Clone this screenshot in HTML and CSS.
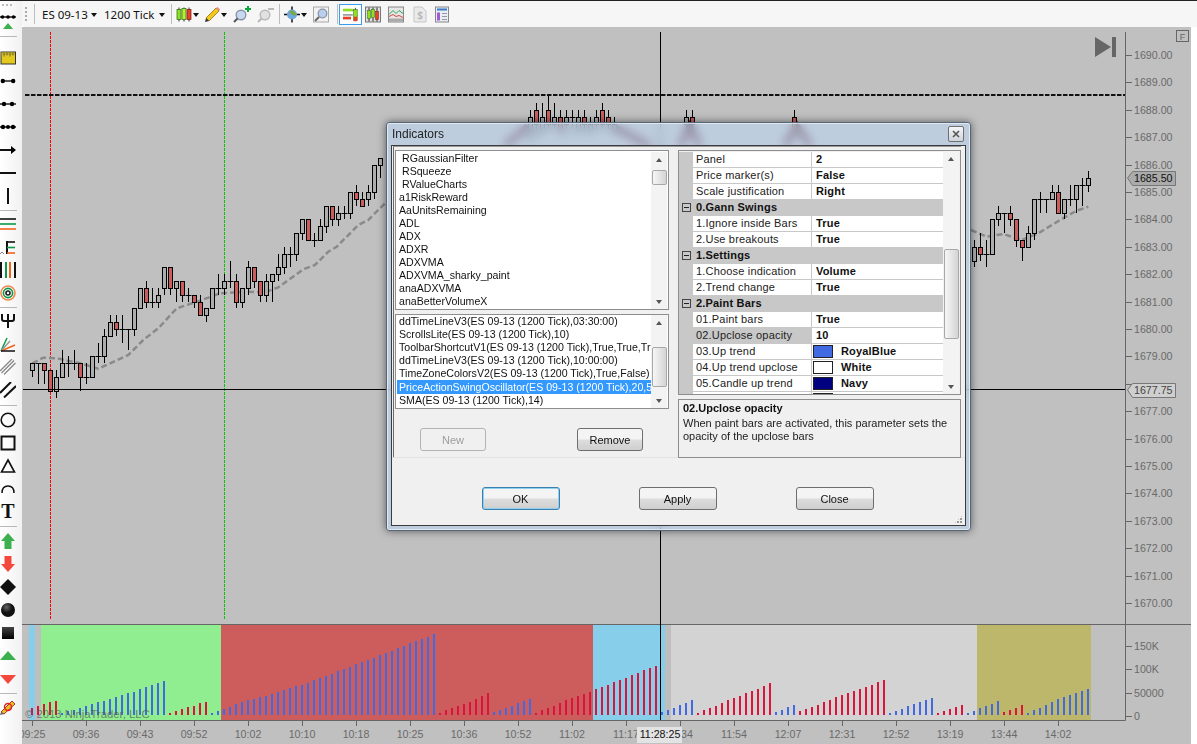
FILE: index.html
```html
<!DOCTYPE html>
<html lang="en">
<head>
    <meta charset="UTF-8">
    <meta name="viewport" content="width=device-width, initial-scale=1.0">
    <title>ES 09-13 1200 Tick - Indicators</title>
    <link rel="stylesheet" href="styles.css">
</head>
<body>
    <div class="app">
        <aside class="sidebar">
            <div class="side-grip"></div>
            <svg class="side-mini" viewBox="0 0 16 10"><path d="M0 3h16" stroke="#111" stroke-width="1.4"/><circle cx="2.5" cy="3" r="1.8"/><circle cx="8" cy="3" r="1.8"/><circle cx="13.5" cy="3" r="1.8"/></svg>
            <svg class="side-mini-up" viewBox="0 0 16 6"><path d="M8 0l5 6H3z" fill="#3cb04f"/></svg>
            <div class="side-sep first"></div>

            <div class="side-item"><svg viewBox="0 0 16 16"><rect x="1" y="2" width="14.5" height="12" fill="#e2c91c" stroke="#333"/><path d="M1.5 5h13V2.5h-13z" fill="#c9b010"/><path d="M4 2.5v4M7 2.5v3M10 2.5v4M13 2.5v3" stroke="#555" stroke-width=".8"/></svg></div>
            <div class="side-item"><svg viewBox="0 0 16 16"><path d="M2 8h12" stroke="#111" stroke-width="1.4"/><circle cx="2.8" cy="8" r="2.2"/><circle cx="13.2" cy="8" r="2.2"/></svg></div>
            <div class="side-item"><svg viewBox="0 0 16 16"><path d="M0 8h16" stroke="#111" stroke-width="1.4"/><circle cx="4" cy="8" r="2.2"/><circle cx="12" cy="8" r="2.2"/></svg></div>
            <div class="side-item"><svg viewBox="0 0 16 16"><path d="M0 8h16" stroke="#111" stroke-width="1.4"/><circle cx="3" cy="8" r="2.2"/><circle cx="8" cy="8" r="2"/><circle cx="13" cy="8" r="2.2"/></svg></div>
            <div class="side-item"><svg viewBox="0 0 16 16"><path d="M0 8h14" stroke="#111" stroke-width="2"/><path d="M11 4l5 4-5 4z"/></svg></div>
            <div class="side-item"><svg viewBox="0 0 16 16"><path d="M0 8h16" stroke="#111" stroke-width="2"/></svg></div>
            <div class="side-item"><svg viewBox="0 0 16 16"><path d="M8 0v16" stroke="#111" stroke-width="2"/></svg></div>
            <div class="side-sep"></div>

            <div class="side-item"><svg viewBox="0 0 16 16"><path d="M0 3h16" stroke="#111" stroke-width="1.6"/><path d="M0 8h16" stroke="#0a9a4a" stroke-width="1.6"/><path d="M0 13h16" stroke="#f0641e" stroke-width="1.6"/></svg></div>
            <div class="side-item"><svg viewBox="0 0 16 16"><path d="M7 2v13" stroke="#111" stroke-width="2"/><path d="M7 3h8" stroke="#111" stroke-width="1.6"/><path d="M7 8.5h8" stroke="#0a9a4a" stroke-width="1.6"/><path d="M7 14h8" stroke="#f0641e" stroke-width="1.6"/><path d="M0 15l2-2 2 2" fill="none" stroke="#888"/></svg></div>
            <div class="side-item"><svg viewBox="0 0 16 16"><path d="M1 0v16" stroke="#111" stroke-width="2"/><path d="M6 0v16" stroke="#0a9a4a" stroke-width="2"/><path d="M10 0v16" stroke="#f0641e" stroke-width="2"/><path d="M15 0v16" stroke="#111" stroke-width="2"/></svg></div>
            <div class="side-item"><svg viewBox="0 0 16 16" fill="none"><circle cx="8" cy="8" r="7" stroke="#f08a50" stroke-width="1.6"/><circle cx="8" cy="8" r="4.6" stroke="#0a9a4a" stroke-width="1.6"/><circle cx="8" cy="8" r="2" stroke="#222" stroke-width="1.6"/></svg></div>
            <div class="side-sep"></div>

            <div class="side-item"><svg viewBox="0 0 16 16" fill="none" stroke="#111" stroke-width="2"><path d="M8 15V1"/><path d="M2 1v5q0 2 2 2h8q2 0 2-2V1"/></svg></div>
            <div class="side-item"><svg viewBox="0 0 16 16" fill="none" stroke-width="1.5"><path d="M1 15L7 2" stroke="#0a9a4a"/><path d="M1 15l14-6" stroke="#f0641e"/><path d="M1 15L10 5" stroke="#999"/><path d="M1 15h14" stroke="#111"/></svg></div>
            <div class="side-item"><svg viewBox="0 0 16 16" stroke="#888" stroke-width="1.3"><path d="M0 12L12 0M1.500 14L14 1.500M4 15.500L15.500 4"/></svg></div>
            <div class="side-item"><svg viewBox="0 0 16 16" stroke="#111" stroke-width="2"><path d="M0 11L11 0M4 15.500L16 4"/></svg></div>
            <div class="side-sep sep-wide"></div>

            <div class="side-item"><svg viewBox="0 0 16 16"><circle cx="8" cy="8" r="6.800" fill="none" stroke="#111" stroke-width="1.600"/></svg></div>
            <div class="side-item"><svg viewBox="0 0 16 16"><rect x="1.500" y="1.500" width="13" height="13" fill="none" stroke="#111" stroke-width="2"/></svg></div>
            <div class="side-item"><svg viewBox="0 0 16 16"><path d="M8 2l6.500 12h-13z" fill="none" stroke="#111" stroke-width="1.600"/></svg></div>
            <div class="side-item"><svg viewBox="0 0 16 16"><path d="M2 12Q2 5 8 5t6 7" fill="none" stroke="#111" stroke-width="1.500"/></svg></div>
            <div class="side-item side-t">T</div>
            <div class="side-sep sep-mid"></div>

            <div class="side-item"><svg viewBox="0 0 16 16"><path d="M8 0l7 8h-3.500v8h-7V8H1z" fill="#3cb04f"/></svg></div>
            <div class="side-item"><svg viewBox="0 0 16 16"><path d="M8 16l7-8h-3.500V0h-7v8H1z" fill="#f4483c"/></svg></div>
            <div class="side-item"><svg viewBox="0 0 16 16"><path d="M8 0l8 8-8 8-8-8z" fill="#111"/></svg></div>
            <div class="side-item"><svg viewBox="0 0 16 16"><defs><radialGradient id="ball" cx=".4" cy=".3" r=".8"><stop offset="0" stop-color="#666"/><stop offset=".5" stop-color="#111"/></radialGradient></defs><circle cx="8" cy="8" r="7" fill="url(#ball)"/></svg></div>
            <div class="side-item"><svg viewBox="0 0 16 16"><defs><linearGradient id="sq" x1="0" y1="0" x2="0" y2="1"><stop offset="0" stop-color="#444"/><stop offset="1" stop-color="#000"/></linearGradient></defs><rect x="2" y="2" width="12" height="12" fill="url(#sq)"/></svg></div>
            <div class="side-item"><svg viewBox="0 0 16 16"><path d="M8 3l8 9H0z" fill="#3cb04f"/></svg></div>
            <div class="side-item"><svg viewBox="0 0 16 16"><path d="M8 13L0 4h16z" fill="#f4483c"/></svg></div>
            <div class="side-sep"></div>

            <div class="side-item"><svg viewBox="0 0 16 16"><path d="M1 13L12 2l3 3L4 15z" fill="#f0c020" stroke="#a33" stroke-width="1"/><circle cx="8" cy="8" r="3.500" fill="none" stroke="#d22" stroke-width="1.500"/><path d="M0 16l1-3 3 2z" fill="#666"/></svg></div>
        </aside>

        <div class="main">
            <div class="toolbar">
                <span class="grip ml-3"></span>
                <span class="tb-sep ml-7"></span>
                <span class="dd-label ml-7 w-46">ES 09-13</span>
                <span class="caret ml-3"></span>
                <span class="dd-label ml-7 w-48">1200 Tick</span>
                <span class="caret ml-3"></span>
                <span class="tb-sep ml-6"></span>
                <svg class="ml-4 w-16" viewBox="0 0 16 16"><path d="M3 1v14M8 1v14M13 1v14" stroke="#333"/><rect x="1" y="3" width="4" height="10" fill="#8fe020" stroke="#2a6a10" stroke-width=".7"/><rect x="6" y="2" width="4" height="11" fill="#b4ef3a" stroke="#2a6a10" stroke-width=".7"/><rect x="11" y="3" width="4" height="10" fill="#e64028" stroke="#7a1a10" stroke-width=".7"/></svg>
                <span class="caret ml-1"></span>
                <svg class="ml-5 w-17" viewBox="0 0 17 17"><path d="M2 12L12 2l3 3L5 15z" fill="#f2c81e" stroke="#96700a" stroke-width=".8"/><path d="M12 2l3 3 1-1.500L13.500 1z" fill="#e88"/><path d="M2 12l3 3-4 1z" fill="#333"/></svg>
                <span class="caret"></span>
                <svg class="ml-6 w-19" viewBox="0 0 19 17"><circle cx="8" cy="9" r="4.800" fill="#c6d8f0" stroke="#8a94a6" stroke-width="1.400"/><path d="M4.500 12.500L1 16" stroke="#555" stroke-width="2"/><path d="M15 0v6M12 3h6" stroke="#0aa83a" stroke-width="2"/></svg>
                <svg class="ml-5 w-17 dim" viewBox="0 0 17 17"><circle cx="8" cy="9" r="4.800" fill="#ddd" stroke="#aaa" stroke-width="1.400"/><path d="M4.500 12.500L1 16" stroke="#aaa" stroke-width="2"/><path d="M11 3h6" stroke="#aaa" stroke-width="2"/></svg>
                <span class="tb-sep ml-5"></span>
                <svg class="ml-4 w-16" viewBox="0 0 16 16"><path d="M8 0v16M0 8h16" stroke="#111" stroke-width="1.500"/><circle cx="8" cy="8" r="5" fill="#6ea8dc"/><path d="M5 5q3-2 5 0t2 4q-3 0-4-1t-3-3z" fill="#7fa83a"/></svg>
                <span class="caret ml-1"></span>
                <svg class="ml-6 w-16" viewBox="0 0 16 16"><rect x=".5" y=".5" width="15" height="15" fill="#f2f2f2" stroke="#aaa"/><circle cx="9.500" cy="7" r="4.300" fill="#b8d0ee" stroke="#8a94a6" stroke-width="1.300"/><path d="M6 10.500L2 14.500" stroke="#666" stroke-width="2"/></svg>
                <span class="tb-sep ml-8"></span>
                <span class="tb-active ml-1">
                    <svg class="w-16" viewBox="0 0 18 17"><path d="M0 4h12" stroke="#2a6a10"/><rect x="0" y="2" width="11" height="3" fill="#8fe020"/><path d="M0 9h11" stroke="#444"/><rect x="0" y="11" width="9" height="3" fill="#e64028"/><path d="M14 1v15" stroke="#333"/><rect x="12" y="3" width="4" height="12" fill="#8fe020" stroke="#2a6a10" stroke-width=".6"/><rect x="12" y="11" width="4" height="5" fill="#e64028"/></svg>
                </span>
                <svg class="ml-3 w-16" viewBox="0 0 16 16"><rect x=".5" y=".5" width="15" height="15" fill="#ddd" stroke="#777"/><path d="M4 1v14M8 1v14M12 1v14" stroke="#333"/><rect x="2.500" y="4" width="3" height="8" fill="#8fe020" stroke="#2a6a10" stroke-width=".5"/><rect x="6.500" y="3" width="3" height="8" fill="#8fe020" stroke="#2a6a10" stroke-width=".5"/><rect x="10.500" y="5" width="3" height="8" fill="#e64028" stroke="#7a1a10" stroke-width=".5"/></svg>
                <svg class="ml-7 w-16" viewBox="0 0 16 16"><rect x=".5" y=".5" width="15" height="15" fill="#e6e6e6" stroke="#888"/><path d="M1 8l4-4 3 3 3-3 4 3" fill="none" stroke="#2aa85a"/><path d="M1 10l4-2 3 2 3-1 4 2" fill="none" stroke="#d84848"/><rect x="1" y="12" width="14" height="3" fill="#aaa"/></svg>
                <svg class="ml-9 w-14 dim" viewBox="0 0 14 16"><path d="M1 .5h8l4 4v11H1z" fill="#e8e8e8" stroke="#bbb"/><text x="7" y="12" class="dollar">$</text></svg>
                <svg class="ml-8 w-14" viewBox="0 0 14 16"><rect x=".5" y=".5" width="13" height="15" fill="#e8eef6" stroke="#888"/><rect x="2" y="2" width="10" height="2" fill="#3a7ac8"/><rect x="2" y="6" width="3" height="8" fill="#a45ad8"/><path d="M7 7h5M7 10h5M7 13h5" stroke="#999"/></svg>
            </div>

            <div class="chart-row">
                <svg id="chart" class="chart" viewBox="22 27 1169 717"></svg>
                <div class="white-strip"></div>
            </div>
        </div>

        <div class="dialog">
            <div class="dlg-title">
                <span>Indicators</span>
                <button class="dlg-close"><svg viewBox="0 0 8 8"><path d="M1 1l6 6M7 1L1 7" stroke="#555" stroke-width="1.600"/></svg></button>
            </div>
            <div class="dlg-body">
                <div class="dlg-main">
                    <div class="left-col">
                        <div class="listbox list-all">
                            <ul>
                                <li class="indent">RGaussianFilter</li>
                                <li class="indent">RSqueeze</li>
                                <li class="indent">RValueCharts</li>
                                <li>a1RiskReward</li>
                                <li>AaUnitsRemaining</li>
                                <li>ADL</li>
                                <li>ADX</li>
                                <li>ADXR</li>
                                <li>ADXVMA</li>
                                <li>ADXVMA_sharky_paint</li>
                                <li>anaADXVMA</li>
                                <li>anaBetterVolumeX</li>
                            </ul>
                            <div class="scrollbar">
                                <span class="arrow up"></span>
                                <div class="track"><div class="thumb thumb-all"></div></div>
                                <span class="arrow down"></span>
                            </div>
                        </div>
                        <div class="listbox list-used">
                            <ul>
                                <li>ddTimeLineV3(ES 09-13 (1200 Tick),03:30:00)</li>
                                <li>ScrollsLite(ES 09-13 (1200 Tick),10)</li>
                                <li>ToolbarShortcutV1(ES 09-13 (1200 Tick),True,True,True)</li>
                                <li>ddTimeLineV3(ES 09-13 (1200 Tick),10:00:00)</li>
                                <li>TimeZoneColorsV2(ES 09-13 (1200 Tick),True,False)</li>
                                <li class="selected">PriceActionSwingOscillator(ES 09-13 (1200 Tick),20,5,True)</li>
                                <li>SMA(ES 09-13 (1200 Tick),14)</li>
                            </ul>
                            <div class="scrollbar">
                                <span class="arrow up"></span>
                                <div class="track"><div class="thumb thumb-used"></div></div>
                                <span class="arrow down"></span>
                            </div>
                        </div>
                        <div class="list-buttons">
                            <button class="btn" disabled>New</button>
                            <button class="btn">Remove</button>
                        </div>
                    </div>

                    <div class="right-col">
                        <div class="propgrid">
                            <div class="pg-rows">
                                <div class="pg-row"><span class="pg-name">Panel</span><span class="pg-val">2</span></div>
                                <div class="pg-row"><span class="pg-name">Price marker(s)</span><span class="pg-val">False</span></div>
                                <div class="pg-row"><span class="pg-name">Scale justification</span><span class="pg-val">Right</span></div>
                                <div class="pg-cat"><span class="pg-box"></span>0.Gann Swings</div>
                                <div class="pg-row"><span class="pg-name">1.Ignore inside Bars</span><span class="pg-val">True</span></div>
                                <div class="pg-row"><span class="pg-name">2.Use breakouts</span><span class="pg-val">True</span></div>
                                <div class="pg-cat"><span class="pg-box"></span>1.Settings</div>
                                <div class="pg-row"><span class="pg-name">1.Choose indication</span><span class="pg-val">Volume</span></div>
                                <div class="pg-row"><span class="pg-name">2.Trend change</span><span class="pg-val">True</span></div>
                                <div class="pg-cat"><span class="pg-box"></span>2.Paint Bars</div>
                                <div class="pg-row"><span class="pg-name">01.Paint bars</span><span class="pg-val">True</span></div>
                                <div class="pg-row"><span class="pg-name active">02.Upclose opacity</span><span class="pg-val">10</span></div>
                                <div class="pg-row"><span class="pg-name">03.Up trend</span><span class="pg-val"><i class="swatch royal"></i>RoyalBlue</span></div>
                                <div class="pg-row"><span class="pg-name">04.Up trend upclose</span><span class="pg-val"><i class="swatch white"></i>White</span></div>
                                <div class="pg-row"><span class="pg-name">05.Candle up trend</span><span class="pg-val"><i class="swatch navy"></i>Navy</span></div>
                                <div class="pg-row"><span class="pg-name"></span><span class="pg-val"><i class="swatch crimson"></i></span></div>
                            </div>
                            <div class="scrollbar">
                                <span class="arrow up"></span>
                                <div class="track"><div class="thumb thumb-grid"></div></div>
                                <span class="arrow down"></span>
                            </div>
                        </div>
                        <div class="desc">
                            <strong>02.Upclose opacity</strong>
                            <p>When paint bars are activated, this parameter sets the opacity of the upclose bars</p>
                        </div>
                    </div>
                </div>
                <div class="dlg-foot">
                    <button class="btn big default">OK</button>
                    <button class="btn big">Apply</button>
                    <button class="btn big">Close</button>
                    <span class="resize-grip"></span>
                </div>
            </div>
        </div>
    </div>
    <script src="chart.js"></script>
</body>
</html>
```

FILE: styles.css
```css
* {
    box-sizing: border-box;
}

body {
    margin: 0;
    font-family: "Liberation Sans", Arial, sans-serif;
    background: #fff;
}

.app {
    display: grid;
    grid-template-columns: 22px 1fr;
    width: 1197px;
    height: 744px;
    overflow: hidden;
    position: relative;
}

/* left drawing tools */
.sidebar {
    display: flex;
    flex-direction: column;
    height: 744px;
    background: linear-gradient(to right, #fff, #f1f1f1);
    border-top: 1px solid #222;
}

.side-grip {
    width: 12px;
    height: 2px;
    margin: 3px 0 0 2px;
    background: repeating-linear-gradient(to right, #bbb 0 2px, transparent 2px 4px);
}

.side-mini {
    width: 16px;
    height: 10px;
    margin-top: 8px;
    flex: none;
    display: block;
}

.side-mini-up {
    width: 16px;
    height: 6px;
    margin-top: -1px;
    flex: none;
    display: block;
}

.side-sep {
    width: 17px;
    height: 1px;
    background: #b8b8b8;
    margin: 3px 0 1px;
    flex: none;
}

.side-sep.first {
    margin: 7px 0 9px;
}

.side-sep.sep-wide {
    margin: 4px 0 2px;
}

.side-sep.sep-mid {
    margin: 3px 0 2px;
}

.side-item {
    height: 23px;
    width: 16px;
    flex: none;
    display: flex;
    align-items: center;
    justify-content: center;
}

.side-item svg {
    width: 16px;
    height: 16px;
    display: block;
}

.side-t {
    font-family: "Liberation Serif", serif;
    font-weight: bold;
    font-size: 20px;
    color: #111;
}

.main {
    display: flex;
    flex-direction: column;
    min-width: 0;
}

/* top toolbar */
.toolbar {
    height: 27px;
    flex: none;
    display: flex;
    align-items: center;
    background: #f6f6f6;
    border-top: 1px solid #222;
    border-bottom-left-radius: 4px;
    font-family: "Noto Sans", sans-serif;
    font-size: 11.5px;
    color: #111;
}

.toolbar svg {
    display: block;
    height: 17px;
    flex: none;
}

.grip {
    width: 2px;
    height: 14px;
    background: repeating-linear-gradient(to bottom, #aaa 0 2px, transparent 2px 4px);
}

.tb-sep {
    width: 1px;
    height: 20px;
    background: #bdbdbd;
}

.dd-label {
    white-space: nowrap;
    flex: none;
}

.w-46 { width: 46px; }
.w-48 { width: 52px; }
.w-14 { width: 14px; }
.w-16 { width: 16px; }
.w-17 { width: 17px; }
.w-19 { width: 19px; }

.ml-1 { margin-left: 1px; }
.ml-3 { margin-left: 3px; }
.ml-4 { margin-left: 4px; }
.ml-5 { margin-left: 5px; }
.ml-6 { margin-left: 6px; }
.ml-7 { margin-left: 7px; }
.ml-8 { margin-left: 8px; }
.ml-9 { margin-left: 9px; }

.caret {
    width: 0;
    height: 0;
    flex: none;
    margin-top: 2px;
    border: 3.5px solid transparent;
    border-top: 4px solid #111;
    border-bottom: 0;
}

.dim {
    opacity: .8;
}

.dollar {
    font-size: 10px;
    font-weight: bold;
    fill: #aaa;
    text-anchor: middle;
}

.tb-active {
    width: 23px;
    height: 21px;
    display: flex;
    align-items: center;
    justify-content: center;
    border: 1px solid #3a9cf0;
    background: #fdfdfd;
}

/* chart */
.chart-row {
    flex: 1;
    display: flex;
    min-height: 0;
}

.chart {
    width: 1169px;
    height: 717px;
    display: block;
    background: #c0c0c0;
    flex: none;
}

.white-strip {
    flex: 1;
    background: #fff;
}

.axis-line {
    stroke: #666;
    stroke-width: 1;
}

.tick-label {
    font-size: 10.67px;
    fill: #6a6a6a;
}

.tag {
    fill: #ababab;
    stroke: #777;
}

.tag.light {
    fill: #cfcfcf;
}

.tag-text {
    font-size: 10.67px;
    fill: #111;
}

.tag-text.dim-text {
    fill: #444;
}

.time-tag {
    fill: #e3e3e3;
}

.time-tag-text {
    font-size: 10.67px;
    fill: #111;
    text-anchor: middle;
}

.copyright {
    font-size: 11.3px;
    fill: rgba(85, 85, 85, .7);
}

.f-box {
    fill: none;
    stroke: #666;
}

.f-text {
    font-size: 9px;
    fill: #666;
    text-anchor: middle;
}

/* dialog sits over the chart, the frame shows it through like aero glass */
.dialog {
    position: absolute;
    left: 386px;
    top: 122px;
    width: 585px;
    height: 409px;
    display: flex;
    flex-direction: column;
    padding: 0 4px 4px;
    border: 1px solid #56677a;
    border-radius: 3px;
    background: rgba(187, 213, 240, .62);
    -webkit-backdrop-filter: blur(5px);
    backdrop-filter: blur(5px);
    box-shadow: 0 0 9px rgba(0, 0, 0, .55), inset 0 0 0 1px rgba(255, 255, 255, .55);
    font-size: 11px;
    color: #111;
}

.dlg-title {
    height: 22px;
    flex: none;
    display: flex;
    align-items: center;
    justify-content: space-between;
    font-size: 12px;
    color: #222;
    padding: 0 0 0 1px;
}

.dlg-close {
    width: 16px;
    height: 16px;
    padding: 0;
    margin: 0 2px 0 0;
    display: flex;
    align-items: center;
    justify-content: center;
    border: 1px solid #6f6f6f;
    border-radius: 2px;
    background: linear-gradient(#f4f6f8, #cfd5dc);
}

.dlg-close svg {
    width: 8px;
    height: 8px;
}

.dlg-body {
    flex: 1;
    display: flex;
    flex-direction: column;
    background: #f0f0f0;
    border: 1px solid #3b3b3b;
    min-height: 0;
}

.dlg-main {
    height: 312px;
    flex: none;
    display: flex;
    border-bottom: 1px solid #e2e2e2;
}

.left-col {
    width: 285px;
    margin-left: 1px;
    flex: none;
    padding: 3px 0 0 1px;
    border-left: 1px solid #6a6a6a;
    border-top: 1px solid #9a9a9a;
}

.listbox {
    width: 274px;
    display: flex;
    background: #fff;
    border: 1px solid #8e8e8e;
    font-size: 10.6px;
    line-height: 13px;
}

.list-all {
    height: 160px;
    padding-top: 1px;
}

.list-used {
    height: 95px;
    margin-top: 4px;
}

.listbox ul {
    flex: 1;
    min-width: 0;
    margin: 0;
    padding: 0 0 0 1px;
    list-style: none;
    overflow: hidden;
}

.listbox li {
    height: 13px;
    padding-left: 2px;
    white-space: nowrap;
    overflow: hidden;
}

.listbox li.indent {
    padding-left: 5px;
}

.listbox li.selected {
    height: 14px;
    line-height: 14px;
    background: #3399ff;
    color: #fff;
}

.scrollbar {
    width: 16px;
    flex: none;
    display: flex;
    flex-direction: column;
    background: #f3f3f3;
    margin-right: 1px;
}

.arrow {
    height: 15px;
    flex: none;
    display: flex;
    align-items: center;
    justify-content: center;
}

.arrow::after {
    content: "";
    border: 3.5px solid transparent;
}

.arrow.up::after {
    border-top: 0;
    border-bottom: 4px solid #555;
}

.arrow.down::after {
    border-bottom: 0;
    border-top: 4px solid #555;
}

.track {
    flex: 1;
    min-height: 0;
}

.thumb {
    width: 15px;
    margin-left: .5px;
    border: 1px solid #a8a8a8;
    border-radius: 2px;
    background: linear-gradient(to right, #f6f6f6, #d4d4d4);
}

.thumb-all {
    height: 15px;
    margin-top: 3px;
}

.thumb-used {
    height: 40px;
    margin-top: 17px;
}

.thumb-grid {
    height: 90px;
    margin-top: 83px;
}

.list-buttons {
    display: flex;
    justify-content: space-between;
    width: 223px;
    margin: 19px 0 0 25px;
}

.btn {
    width: 66px;
    height: 23px;
    padding: 0;
    font-family: inherit;
    font-size: 11px;
    color: #111;
    border: 1px solid #6e6e6e;
    border-radius: 3px;
    background: linear-gradient(#f4f4f4 0 45%, #dcdcdc 55%, #cfcfcf);
}

.btn:disabled {
    color: #9e9e9e;
    border-color: #b4b4b4;
    background: #f0f0f0;
}

.btn.big {
    width: 78px;
}

.btn.default {
    border-color: #3c7fb1;
    box-shadow: inset 0 0 0 1px #8fd0ee;
}

.right-col {
    width: 283px;
    flex: none;
    padding-top: 3px;
    border-top: 1px solid #9a9a9a;
}

.propgrid {
    height: 245px;
    display: flex;
    border: 1px solid #8e8e8e;
    background: #f0f0f0;
    line-height: 15px;
    letter-spacing: .18px;
}

.pg-rows {
    flex: 1;
    min-width: 0;
    padding-top: 1px;
    overflow: hidden;
}

.pg-row {
    height: 16px;
    display: flex;
    background: #c8c8c8;
    padding-left: 14px;
    border-bottom: 1px solid #c8c8c8;
    white-space: nowrap;
}

.pg-name {
    width: 118px;
    flex: none;
    padding-left: 3px;
    background: #fff;
    color: #222;
}

.pg-name.active {
    background: #c8c8c8;
}

.pg-val {
    flex: 1;
    margin-left: 1px;
    padding-left: 4px;
    display: flex;
    align-items: center;
    background: #fff;
    font-weight: bold;
    color: #111;
}

.pg-cat {
    height: 16px;
    display: flex;
    align-items: center;
    padding-left: 3px;
    background: #c8c8c8;
    border-bottom: 1px solid #c8c8c8;
    font-weight: bold;
    color: #111;
}

.pg-box {
    width: 9px;
    height: 9px;
    margin-right: 5px;
    flex: none;
    display: flex;
    align-items: center;
    justify-content: center;
    border: 1px solid #444;
}

.pg-box::after {
    content: "";
    width: 5px;
    height: 1px;
    background: #222;
}

.swatch {
    width: 20px;
    height: 13px;
    margin: 0 8px 0 -3px;
    flex: none;
    border: 1px solid #222;
}

.swatch.royal { background: #4169e1; }
.swatch.white { background: #fff; }
.swatch.navy { background: #000080; }
.swatch.crimson { background: #dc143c; }

.desc {
    height: 59px;
    margin-top: 4px;
    padding: 1px 4px;
    border: 1px solid #8e8e8e;
    line-height: 13px;
}

.desc strong {
    display: block;
    margin-bottom: 1px;
    line-height: 15px;
}

.desc p {
    margin: 0;
    color: #222;
}

.dlg-foot {
    flex: 1;
    position: relative;
    display: flex;
    justify-content: center;
    align-items: flex-start;
    gap: 79px;
    padding: 29px 2px 0 0;
}

.resize-grip {
    position: absolute;
    right: 2px;
    bottom: 1px;
    width: 9px;
    height: 9px;
    background: radial-gradient(circle at 1px 1px, #9a9a9a 1px, transparent 1px) 0 0 / 3px 3px;
    -webkit-clip-path: polygon(100% 0, 100% 100%, 0 100%);
    clip-path: polygon(100% 0, 100% 100%, 0 100%);
}

/* chart drawing */
.wick { stroke: #000; stroke-width: 1; }
.body-up { fill: #adadad; stroke: #000; stroke-width: 1; }
.body-down { fill: #cd5c5c; stroke: #000; stroke-width: 1; }
.sma { fill: none; stroke: #8a8a8a; stroke-width: 2.5; stroke-dasharray: 6 3; }
.trace { fill: none; stroke: #5a1522; stroke-width: 6; }
.hline { stroke: #111; stroke-width: 2; stroke-dasharray: 4.500 1.500; }
.cross { stroke: #000; stroke-width: 1; }
.vline-red { stroke: #f00; stroke-width: 1; stroke-dasharray: 3 1; }
.vline-green { stroke: #0c0; stroke-width: 1; stroke-dasharray: 3 1; }
.vol-up { fill: #4169e1; }
.vol-down { fill: #dc143c; }
.play { fill: #666; }
```

FILE: chart.js
```javascript
const X0 = 32.5;
const STEP = 6;
const yOf = (p) => 55 + (1690 - p) * 27.4;
let out = "";

// background bands of the lower panel
const bands = [
    [29, 35, "#87ceeb"], [35, 41, "#bebebe"], [41, 221, "#90ee90"],
    [221, 593, "#cd5c5c"], [593, 665, "#87ceeb"], [665, 671, "#bebebe"],
    [671, 977, "#d3d3d3"], [977, 1091, "#bdb76b"]
];
bands.forEach(([a, b, c]) => {
    out += `<rect x="${a}" y="625" width="${b - a}" height="95" fill="${c}"/>`;
});

// volume bars, runs of red / blue
const volume = [
    ["down", [7, 9, 11, 13, 14]],
    ["up", [2, 4, 5, 7, 9, 11, 13, 14, 16, 18, 20, 22, 23, 26, 28, 30, 32, 34]],
    ["down", [2, 4, 6, 8, 9, 12, 13]],
    ["up", [2, 4, 6, 8, 11, 13, 15, 16, 18, 19, 21, 23, 25, 27, 29, 30, 32, 35, 37, 39, 41, 44, 46, 48, 51, 53, 55, 57, 60, 62, 64, 67, 69, 72, 74, 76, 78, 81]],
    ["down", [2, 5, 7, 9, 11, 13, 16, 19, 22]],
    ["up", [3, 5, 7, 9, 12, 14, 16]],
    ["down", [2, 5, 7, 9, 12, 15, 17, 19, 21, 23, 26, 28, 30, 33, 35, 37, 40, 42, 45, 47, 49]],
    ["up", [3, 5, 7, 10, 12, 15]],
    ["down", [2, 5, 7, 9, 12, 15, 17, 19, 22, 24, 26, 29, 32]],
    ["up", [3, 5, 8, 10]],
    ["down", [4, 6, 8, 10, 13, 15, 18, 20, 22, 24, 26, 28, 30, 33, 35]],
    ["up", [2, 4, 6, 9, 11, 13, 15, 17]],
    ["down", [2, 4, 6, 8, 10]],
    ["up", [2, 4, 7, 9, 11, 14]],
    ["down", [3, 5, 7, 10]],
    ["up", [2, 5, 7, 10, 13, 16, 18, 20, 22, 24, 26]]
];
let n = 0;
volume.forEach(([kind, heights]) => {
    heights.forEach((h) => {
        out += `<rect class="vol-${kind}" x="${31 + n * STEP}" y="${715 - h}" width="2" height="${h}"/>`;
        n++;
    });
});

// axes
out += '<path class="axis-line" d="M1125.500 32V720.500M22 720.500H1125.500M22 624.500H1191"/>';
for (let p = 1670; p <= 1690; p++) {
    const y = Math.round(yOf(p));
    out += `<path class="axis-line" d="M1126 ${y + .5}h6"/>`;
    if (p !== 1678) {
        out += `<text class="tick-label" x="1134" y="${y + 4}">${p}.00</text>`;
    }
}
[["150K", 646], ["100K", 669], ["50000", 693], ["0", 716]].forEach(([t, y]) => {
    out += `<path class="axis-line" d="M1126 ${y + .5}h6"/>`;
    out += `<text class="tick-label" x="1134" y="${y + 4}">${t}</text>`;
});
const times = ["09:25", "09:36", "09:43", "09:52", "10:02", "10:10", "10:18", "10:25", "10:36", "10:52",
    "11:02", "11:17", "11:34", "11:54", "12:07", "12:31", "12:52", "13:19", "13:44", "14:02"];
times.forEach((t, i) => {
    const x = 32 + i * 54;
    out += `<path class="axis-line" d="M${x + .5} 721v5"/>`;
    out += `<text class="tick-label" x="${x}" y="738" text-anchor="middle">${t}</text>`;
});

// marker lines
out += '<path class="vline-red" d="M50.500 32V620"/><path class="vline-green" d="M224.500 32V620"/>';

// blurred only, it runs under the dialog title
out += '<polyline class="trace" points="505,146 528,126"/><polyline class="trace" points="612,126 650,146"/>';
out += '<polyline class="trace" points="680,146 690,126 700,146"/><polyline class="trace" points="785,146 797,126 810,146"/>';

// sma
out += '<polyline class="sma" points="32.3,363.3 43.3,357.7 56.7,358.3 80,363.3 98.3,368.7 128.3,355 143.3,340 158.3,328.3 176.7,308.3 200,300.700 220,293.3 246.700,291.700 265,292.300 278.300,287.300 303.300,269.300 315,265 328.300,251.700 336.700,246.700 358.300,225 368.300,220 385,203.300"/>';
out += '<polyline class="sma" points="971,230 986.700,236.700 1003.300,234 1021.700,240 1038.300,233.300 1060,220 1076.700,210.700 1088.300,206.700"/>';

// candles: [bar index, body top, body bottom, high, low, red]
const candles = [
    [0, 1678.75, 1678.5, 1678.75, 1678.25], [1, 1678.75, 1678.75, 1678.75, 1678], [2, 1678.75, 1678.5, 1678.75, 1678, 1],
    [3, 1678.5, 1677.75, 1678.5, 1677.75, 1], [4, 1678.25, 1677.75, 1678.5, 1677.5], [5, 1678.75, 1678.25, 1679.25, 1678.25],
    [6, 1678.75, 1678.75, 1679, 1678.25], [7, 1678.75, 1678.75, 1679.25, 1678.5], [8, 1678.75, 1678.25, 1678.75, 1677.75, 1],
    [9, 1678.25, 1678.25, 1678.75, 1678], [10, 1679, 1678.25, 1679, 1678.25], [11, 1679, 1679, 1679.5, 1678.75],
    [12, 1679.75, 1679, 1680, 1678.75], [13, 1680.25, 1679.75, 1680.5, 1679.75], [14, 1680.25, 1680, 1680.5, 1679.75, 1],
    [15, 1680, 1680, 1680.5, 1679.5], [16, 1680, 1680, 1680, 1679.25], [17, 1680.75, 1680, 1680.75, 1679.75],
    [18, 1681.5, 1680.75, 1681.5, 1680.75], [19, 1681.5, 1681, 1681.75, 1680.75, 1], [20, 1681, 1681, 1681.5, 1680.75],
    [21, 1681.25, 1681, 1681.5, 1680.75], [22, 1682.25, 1681.5, 1682.25, 1681.25], [23, 1682.25, 1681.5, 1682.25, 1681.25, 1],
    [24, 1681.75, 1681.5, 1681.75, 1681], [25, 1681.75, 1681.25, 1681.75, 1681, 1], [26, 1681.25, 1681.25, 1681.5, 1681],
    [27, 1681.25, 1681, 1681.25, 1680.75, 1], [28, 1681, 1680.5, 1681.25, 1680.5, 1], [29, 1680.75, 1680.5, 1680.75, 1680.25],
    [30, 1681.5, 1680.75, 1681.5, 1680.75], [31, 1681.5, 1681.5, 1682, 1681.25], [32, 1681.75, 1681.5, 1682, 1681.25],
    [33, 1681.75, 1681.75, 1682.5, 1681.5], [34, 1681.75, 1681, 1682, 1680.75, 1], [35, 1681.5, 1681, 1681.5, 1680.75],
    [36, 1682.25, 1681.5, 1682.5, 1681.25], [37, 1682.25, 1681.75, 1682.25, 1681.5, 1], [38, 1681.75, 1681.25, 1681.75, 1681, 1],
    [39, 1681.75, 1681.25, 1682, 1681], [40, 1682, 1681.75, 1682, 1681], [41, 1682.25, 1682, 1682.75, 1681.75],
    [42, 1682.75, 1682.25, 1683, 1682], [43, 1682.75, 1682.75, 1683, 1682.25], [44, 1683.5, 1682.75, 1683.5, 1682.5],
    [45, 1684, 1683.5, 1684, 1683.25], [46, 1684, 1683.25, 1684, 1683.25, 1], [47, 1683.25, 1683.25, 1683.5, 1683],
    [48, 1683.75, 1683.25, 1684, 1683.25], [49, 1684.5, 1683.75, 1684.5, 1683.5], [50, 1684.5, 1684, 1684.5, 1683.75, 1],
    [51, 1684.25, 1684, 1684.5, 1683.75], [52, 1684.25, 1684.25, 1684.5, 1684], [53, 1685, 1684.25, 1685, 1684],
    [54, 1685, 1684.75, 1685.25, 1684.5, 1], [55, 1684.75, 1684.5, 1685, 1684.5, 1], [56, 1685, 1684.75, 1685.25, 1684.5],
    [57, 1686, 1685, 1686, 1684.75], [58, 1686.25, 1686, 1686.25, 1685.5],
    // these stick out above the dialog
    [83, 1687.75, 1687, 1688, 1686.75], [84, 1688, 1687.5, 1688.25, 1687, 1], [85, 1687.75, 1687.25, 1688.25, 1687],
    [86, 1688, 1687.5, 1688.5, 1687.25, 1], [87, 1687.75, 1687.5, 1688.25, 1687.25], [88, 1687.75, 1687.25, 1688, 1687, 1],
    [89, 1687.75, 1687.5, 1688, 1687], [90, 1687.75, 1687.75, 1688, 1687.25], [91, 1687.75, 1687.25, 1688, 1687],
    [92, 1687.75, 1687.5, 1688, 1687.25, 1], [93, 1687.5, 1687.25, 1687.75, 1687], [94, 1687.75, 1687.5, 1688, 1687.25],
    [95, 1688, 1687.5, 1688.25, 1687.25, 1], [96, 1687.75, 1687.5, 1688, 1687.25, 1], [97, 1687.5, 1687.25, 1687.75, 1687],
    [109, 1687.75, 1687.5, 1688, 1687.25], [110, 1687.75, 1687.5, 1688, 1687.25, 1], [127, 1687.75, 1687.25, 1688, 1687, 1],
    [157, 1683, 1682.5, 1683.25, 1682.25], [158, 1683, 1682.75, 1683.5, 1682.5, 1], [159, 1682.75, 1682.75, 1683.25, 1682.25],
    [160, 1684, 1682.75, 1684, 1682.75], [161, 1684.25, 1684, 1684.5, 1683.75], [162, 1684.25, 1684.25, 1684.25, 1683.5],
    [163, 1684.25, 1684, 1684.5, 1683.75, 1], [164, 1684, 1683.25, 1684, 1683, 1], [165, 1683.25, 1683, 1683.25, 1682.5, 1],
    [166, 1683.5, 1683, 1683.75, 1683], [167, 1684.75, 1683.5, 1684.75, 1683.25], [168, 1684.75, 1684.75, 1685, 1684.25],
    [169, 1684.75, 1684.75, 1684.75, 1684.25], [170, 1685, 1684.75, 1685.25, 1684.75], [171, 1685, 1684.25, 1685.25, 1684.25, 1],
    [172, 1684.75, 1684.25, 1684.75, 1684], [173, 1684.75, 1684.75, 1685.25, 1684.5], [174, 1685.25, 1684.75, 1685.25, 1684.25],
    [175, 1685.25, 1685.25, 1685.5, 1684.5], [176, 1685.5, 1685.25, 1685.75, 1685]
];
candles.forEach(([i, top, bottom, high, low, red]) => {
    const x = X0 + i * STEP;
    const yt = Math.round(yOf(top)) + .5;
    const yb = Math.round(yOf(bottom)) + .5;
    out += `<path class="wick" d="M${x} ${Math.round(yOf(high))}V${Math.round(yOf(low))}"/>`;
    if (top === bottom) {
        out += `<path class="wick" d="M${x - 3} ${yt}h6"/>`;
    } else {
        out += `<rect class="${red ? "body-down" : "body-up"}" x="${x - 2}" y="${yt}" width="4" height="${yb - yt}"/>`;
    }
});

// lines on top of the bars
out += '<path class="hline" d="M25 95H1125"/>';
out += '<path class="cross" d="M23 389.500H1125M660.500 32V720"/>';

// price and time tags
out += '<polygon class="tag" points="1127.500,178 1132.500,171.500 1175.500,171.500 1175.500,185.500 1132.500,185.500"/>';
out += '<text class="tag-text" x="1134" y="182">1685.50</text>';
out += '<polygon class="tag light" points="1127.500,390 1132.500,383.500 1175.500,383.500 1175.500,397.500 1132.500,397.500"/>';
out += '<text class="tag-text dim-text" x="1134" y="394">1677.75</text>';
out += '<rect class="time-tag" x="637" y="727" width="45" height="16"/>';
out += '<text class="time-tag-text" x="660" y="738">11:28:25</text>';

out += '<text class="copyright" x="25" y="718">\u00a9 2013 NinjaTrader, LLC</text>';
out += '<path class="play" d="M1095 37l16 10-16 10zM1112 37h4v20h-4z"/>';
out += '<rect class="f-box" x="1176.500" y="30.500" width="12" height="11"/><text class="f-text" x="1182.500" y="39.500">F</text>';

document.getElementById("chart").innerHTML = out;
```
